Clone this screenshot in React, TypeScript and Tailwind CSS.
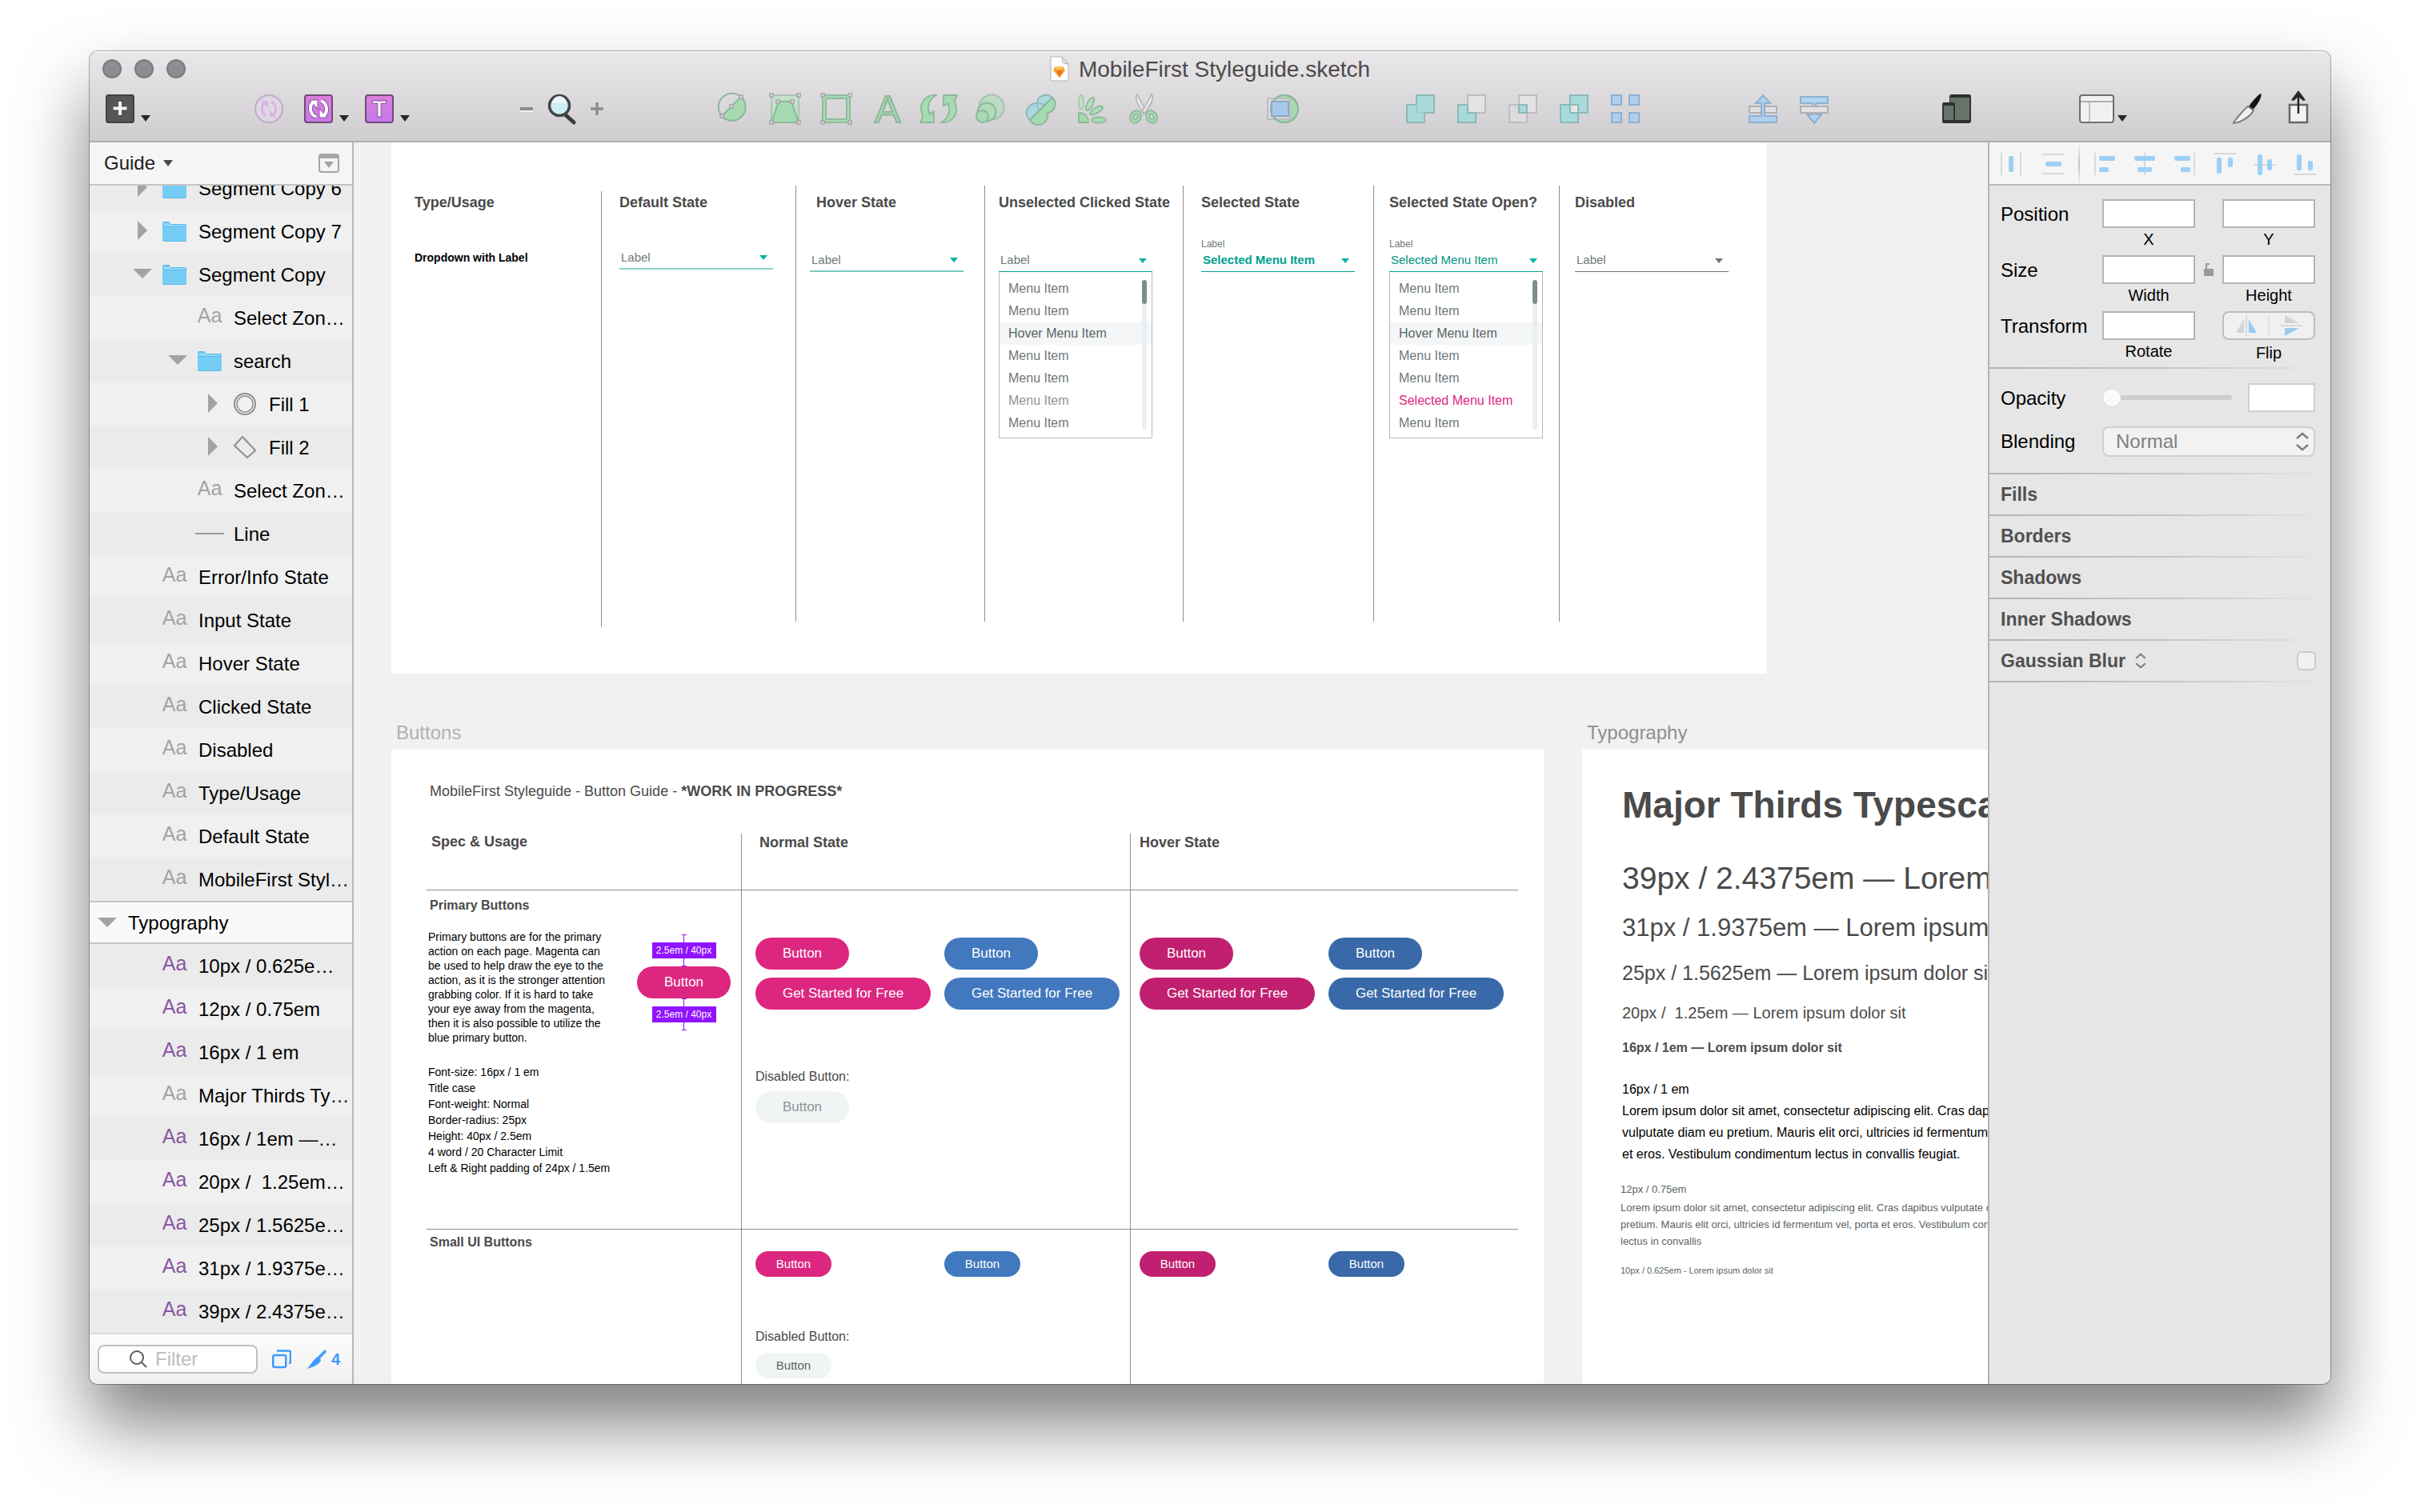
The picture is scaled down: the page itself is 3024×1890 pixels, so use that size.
import React, { useId, useState } from 'react';

type Children = { children?: React.ReactNode };

/* ------------------------------------------------------------------ */
/* Toolbar icons                                                       */
/* ------------------------------------------------------------------ */

const GREEN = '#a6dbb2';
const GREEN_LINE = '#8cb79b';
const GREY_LINE = '#b3b0b3';
const TEAL = '#a8dadb';
const TEAL_LINE = '#8db8ba';
const BLUE = '#aecfee';
const BLUE_LINE = '#8fafd0';

function Icon({ children, className = 'size-10' }: Children & { className?: string }) {
  return (
    <svg viewBox="0 0 40 40" className={className} fill="none" aria-hidden="true">
      {children}
    </svg>
  );
}

function Handle({ x, y }: { x: number; y: number }) {
  return <rect x={x - 2} y={y - 2} width="4" height="4" fill="#e4e2e4" stroke="#aba4ab" strokeWidth="1.6" />;
}

const icons = {
  insert: (
    <Icon>
      <rect x="2" y="2" width="36" height="36" rx="4" fill="#565656" />
      <rect x="3" y="3" width="34" height="34" rx="3" stroke="#414141" strokeWidth="2" />
      <path d="M20 12v17M11.500 20.500h17" stroke="#333" strokeWidth="4" />
      <path d="M20 11v17M11.500 19.500h17" stroke="#f4f4f4" strokeWidth="4" />
    </Icon>
  ),
  createSymbol: (
    <Icon>
      <circle cx="20" cy="20" r="17" fill="#dfd8e2" stroke="#c0acc6" strokeWidth="2" />
      <path d="M17 29c-6-3-8-12-2-17M23 11c6 3 8 12 2 17" stroke="#d9b3e4" strokeWidth="3" />
      <path d="M10 10h9v8zM30 30h-9v-8z" fill="#d9b3e4" />
    </Icon>
  ),
  symbol: (
    <Icon>
      <defs>
        <linearGradient id="violet" x1="0" y1="0" x2="0" y2="1">
          <stop offset="0" stopColor="#dd7fdc" />
          <stop offset="1" stopColor="#c579ec" />
        </linearGradient>
      </defs>
      <rect x="3" y="3" width="34" height="34" rx="3" fill="url(#violet)" stroke="#704a77" strokeWidth="2" />
      <path d="M17 30c-8-3-9-13-4-18M23 10c8 3 9 13 4 18" stroke="#8d4c9d" strokeWidth="6" />
      <path d="M9 9h10v11zM31 31H21V20z" fill="#fff" stroke="#8d4c9d" strokeWidth="1" />
      <path d="M17 30c-8-3-9-13-4-18M23 10c8 3 9 13 4 18" stroke="#fff" strokeWidth="4" />
    </Icon>
  ),
  textStyle: (
    <Icon>
      <rect x="3" y="3" width="34" height="34" rx="3" fill="url(#violet)" stroke="#704a77" strokeWidth="2" />
      <text x="20" y="30" textAnchor="middle" fontFamily="Liberation Sans" fontWeight="700" fontSize="30" fill="#fff" stroke="#8d4c9d" strokeWidth="1">
        T
      </text>
    </Icon>
  ),
  zoom: (
    <Icon>
      <path d="M24 27l11 10" stroke="#3a3a3a" strokeWidth="5" strokeLinecap="round" />
      <circle cx="17" cy="16" r="12.500" fill="#cdeef5" stroke="#444" strokeWidth="3.500" />
      <path d="M8 13a9 9 0 0 1 18 0z" fill="#e6f7fa" />
    </Icon>
  ),
  edit: (
    <Icon>
      <path d="M5 29A17 17 0 1 0 29 5z" fill={GREEN} stroke={GREEN_LINE} strokeWidth="2" />
      <path d="M5 29A17 17 0 0 1 29 5" stroke={GREEN_LINE} strokeWidth="2" />
      <Handle x={5} y={29} />
      <Handle x={17} y={17} />
      <Handle x={29} y={5} />
    </Icon>
  ),
  transform: (
    <Icon>
      <rect x="3" y="3" width="34" height="34" fill="#c5dfca" stroke="#abc4b2" strokeWidth="2" />
      <path d="M12 11h16l9 26H3z" fill={GREEN} stroke={GREEN_LINE} strokeWidth="2" />
      <Handle x={3} y={3} />
      <Handle x={37} y={3} />
      <Handle x={3} y={37} />
      <Handle x={37} y={37} />
      <Handle x={11} y={11} />
      <Handle x={29} y={11} />
    </Icon>
  ),
  resize: (
    <Icon>
      <rect x="5" y="5" width="30" height="30" stroke={GREEN_LINE} strokeWidth="6" />
      <rect x="5" y="5" width="30" height="30" stroke={GREEN} strokeWidth="2.500" />
      <Handle x={3} y={3} />
      <Handle x={37} y={3} />
      <Handle x={3} y={37} />
      <Handle x={37} y={37} />
    </Icon>
  ),
  outlines: (
    <Icon>
      <text x="20" y="37" textAnchor="middle" fontFamily="Liberation Sans" fontSize="48" fill={GREEN} stroke={GREEN_LINE} strokeWidth="2">
        A
      </text>
    </Icon>
  ),
  rotate: (
    <Icon className="h-10 w-12">
      <g fill={GREEN} stroke={GREEN_LINE} strokeWidth="1.800" strokeLinejoin="round">
        <path d="M17 3C3 2-5 13-1 26l1 4-3 7h17V23l-5 4C5 19 7 8 17 3z" />
        <path d="M23 37c14 1 22-10 18-23l-1-4 3-7H26v14l5-4c4 8 2 19-8 24z" />
      </g>
    </Icon>
  ),
  scale: (
    <Icon>
      <circle cx="22" cy="18" r="15.500" fill="#bedcc5" stroke="#a5c2ad" strokeWidth="2" />
      <circle cx="16" cy="24" r="11.500" fill="#b0dbb9" stroke={GREEN_LINE} strokeWidth="2" />
      <circle cx="10.500" cy="29.500" r="7.500" fill={GREEN} stroke={GREEN_LINE} strokeWidth="2" />
    </Icon>
  ),
  flatten: (
    <Icon>
      <path d="M34 6A11 11 0 0 0 15 13A12 12 0 0 0 6 34z" fill="#abd8df" stroke={TEAL_LINE} strokeWidth="2" />
      <path d="M34 6A11 11 0 0 1 28 25A12 12 0 0 1 6 34z" fill={GREEN} stroke={GREEN_LINE} strokeWidth="2" />
      <path d="M15 13c0 5 1 8 3 9M15 13c4 0 7 1 9 3" stroke={TEAL_LINE} strokeWidth="1.500" />
    </Icon>
  ),
  rotateCopies: (
    <Icon>
      <g stroke={GREEN_LINE} strokeWidth="1.800">
        <path d="M3 25c7 0 12 5 12 12H3z" fill={GREEN} />
        <ellipse cx="6" cy="12" rx="3" ry="9" fill="#c6dfcb" stroke="#aac5b1" />
        <ellipse cx="17" cy="14" rx="3.500" ry="9" transform="rotate(28 17 14)" fill="#b7dcbf" />
        <ellipse cx="25" cy="22" rx="3.500" ry="9" transform="rotate(60 25 22)" fill="#acdab6" />
        <ellipse cx="28" cy="34" rx="9" ry="3.500" fill={GREEN} />
      </g>
    </Icon>
  ),
  scissors: (
    <Icon>
      <g stroke={GREY_LINE} strokeWidth="1.500" fill="#eae8ea">
        <path d="M12 2c-3 5-1 10 8 24l3-3C18 14 15 8 12 2z" />
        <path d="M30 2c3 5 1 10-9 24l-3-3C24 14 27 8 30 2z" />
      </g>
      <g stroke={GREEN_LINE} strokeWidth="6">
        <ellipse cx="10" cy="30" rx="4.500" ry="6" transform="rotate(28 10 30)" />
        <ellipse cx="30" cy="30" rx="4.500" ry="6" transform="rotate(-28 30 30)" />
      </g>
      <g stroke={GREEN} strokeWidth="2.500">
        <ellipse cx="10" cy="30" rx="4.500" ry="6" transform="rotate(28 10 30)" />
        <ellipse cx="30" cy="30" rx="4.500" ry="6" transform="rotate(-28 30 30)" />
      </g>
    </Icon>
  ),
  mask: (
    <Icon>
      <circle cx="22" cy="20" r="17" fill={GREEN} stroke={GREEN_LINE} strokeWidth="2" />
      <rect x="1" y="7" width="28" height="26" fill="#dcdadd" fillOpacity="0.7" stroke="#bfbcc0" strokeWidth="2" />
      <circle cx="22" cy="20" r="17" stroke={GREEN_LINE} strokeWidth="2" />
      <rect x="6" y="11" width="21" height="18" fill="#a9c9ea" stroke="#8fa6c9" strokeWidth="2" />
    </Icon>
  ),
  union: (
    <Icon>
      <path d="M15 3h22v22H25v12H3V15h12z" fill={TEAL} stroke={TEAL_LINE} strokeWidth="2" />
      <path d="M15 15v10h10" stroke="#9cc9ca" strokeWidth="1.500" />
    </Icon>
  ),
  subtract: (
    <Icon>
      <rect x="15" y="3" width="22" height="22" fill="#e4e2e4" stroke="#bebcbe" strokeWidth="2" />
      <path d="M3 15h12v10h10v12H3z" fill={TEAL} stroke={TEAL_LINE} strokeWidth="2" />
    </Icon>
  ),
  intersect: (
    <Icon>
      <rect x="3" y="15" width="22" height="22" fill="#dcdadc" stroke="#bebcbe" strokeWidth="2" />
      <rect x="15" y="3" width="22" height="22" fill="#e4e2e4" stroke="#bebcbe" strokeWidth="2" />
      <rect x="15" y="15" width="10" height="10" fill={TEAL} stroke={TEAL_LINE} strokeWidth="2" />
    </Icon>
  ),
  difference: (
    <Icon>
      <path d="M15 3h22v22H25v12H3V15h12z" fill={TEAL} stroke={TEAL_LINE} strokeWidth="2" />
      <rect x="15" y="15" width="10" height="10" fill="#e8e8e8" stroke={TEAL_LINE} strokeWidth="2" />
    </Icon>
  ),
  group: (
    <Icon>
      <g fill={BLUE} stroke={BLUE_LINE} strokeWidth="2">
        <rect x="3" y="3" width="12" height="12" />
        <rect x="25" y="3" width="12" height="12" />
        <rect x="3" y="25" width="12" height="12" />
        <rect x="25" y="25" width="12" height="12" />
      </g>
    </Icon>
  ),
  forward: (
    <Icon>
      <rect x="3" y="17" width="34" height="8" fill="#e2e0e2" stroke={GREY_LINE} strokeWidth="2" />
      <path d="M20 3l9 10h-7v16h15v8H3v-8h15V13h-7z" fill={BLUE} stroke={BLUE_LINE} strokeWidth="2" />
    </Icon>
  ),
  backward: (
    <Icon>
      <path d="M20 38l9-11h-7V13h15V5H3v8h15v14h-7z" fill="#aed6ef" stroke={BLUE_LINE} strokeWidth="2" />
      <rect x="3" y="17" width="34" height="8" fill="#e2e0e2" stroke={GREY_LINE} strokeWidth="2" />
    </Icon>
  ),
  mirror: (
    <Icon>
      <rect x="11" y="2" width="27" height="36" rx="3" fill="#2e312f" />
      <rect x="12" y="6" width="24" height="28" fill="#66756c" />
      <rect x="2" y="12" width="16" height="26" rx="2" fill="#2e312f" />
      <rect x="4" y="16" width="12" height="18" fill="#66756c" />
    </Icon>
  ),
  knife: (
    <Icon>
      <path d="M37 1c3 3-6 17-10 20l-5-4C26 11 34 2 37 1z" fill="#141414" />
      <path d="M21 17l7 5C24 30 12 37 3 38c1-3 12-16 18-21z" fill="#f1f1f1" stroke="#7c7c7c" strokeWidth="2" strokeLinejoin="round" />
    </Icon>
  ),
  share: (
    <Icon>
      <rect x="9" y="15" width="22" height="22" fill="#f3f3f3" stroke="#666" strokeWidth="2.500" />
      <path d="M20 2v24" stroke="#262626" strokeWidth="2.500" />
      <path d="M20-3l9 12-3 1-6-5-6 5-3-1z" fill="#262626" />
    </Icon>
  ),
};

function ToolButton({ name, label }: { name: keyof typeof icons; label: string }) {
  return (
    <button type="button" aria-label={label} className="flex size-10 shrink-0 items-center justify-center [&>svg]:shrink-0 [&>svg]:overflow-visible">
      {icons[name]}
    </button>
  );
}

function Caret({ className = 'w-3 h-2 text-[#262626]' }: { className?: string }) {
  return (
    <svg viewBox="0 0 12 8" preserveAspectRatio="none" className={`shrink-0 ${className}`} aria-hidden="true">
      <path d="M0 0h12L6 8z" fill="currentColor" />
    </svg>
  );
}

function MenuButton({ name, label }: { name: keyof typeof icons; label: string }) {
  return (
    <div className="flex items-end gap-1.5">
      <ToolButton name={name} label={label} />
      <button type="button" aria-label={`${label} menu`} className="pb-1">
        <Caret />
      </button>
    </div>
  );
}

function TitleBar() {
  return (
    <header className="shrink-0 border-b-2 border-[#b0aeb0] bg-linear-to-b from-[#e9e7e9] to-[#cfcdcf] pb-5 shadow-[inset_0_2px_0_#f4f3f4]">
      <div className="grid h-11 grid-cols-[1fr_auto_1fr] items-center px-4">
        <div className="flex gap-4">
          <button type="button" aria-label="Close" className="size-6 rounded-full border-2 border-[#7c7b7e] bg-[#8e8d91]" />
          <button type="button" aria-label="Minimize" className="size-6 rounded-full border-2 border-[#7c7b7e] bg-[#8e8d91]" />
          <button type="button" aria-label="Zoom window" className="size-6 rounded-full border-2 border-[#7c7b7e] bg-[#8e8d91]" />
        </div>
        <div className="flex items-center gap-3">
          <svg viewBox="0 0 24 32" className="h-8 w-6" aria-hidden="true">
            <path d="M1 1h14l8 9v21H1z" fill="#fff" stroke="#b5b3b5" />
            <path d="M15 1c1 4 0 8 2 8l6 1z" fill="#e6e6e6" stroke="#b5b3b5" />
            <path d="M7 13h9l3 5-7 9-8-9z" fill="#f7a32b" />
            <path d="M8 18h8l-4 9z" fill="#e9741c" />
            <path d="M7 13h9l-1 4H8z" fill="#fcc558" />
          </svg>
          <h1 className="pt-0.5 text-[28px] leading-9 text-[#4b494c]">MobileFirst Styleguide.sketch</h1>
        </div>
      </div>
      <div className="mt-2 flex h-10 items-center pr-5 pl-[18px]">
        <MenuButton name="insert" label="Insert" />
        <div className="ml-32 flex items-center gap-[22px]">
          <ToolButton name="createSymbol" label="Create symbol" />
          <MenuButton name="symbol" label="Symbol" />
        </div>
        <div className="ml-[18px] flex">
          <MenuButton name="textStyle" label="Text style" />
        </div>
        <div className="ml-[136px] flex items-center gap-3.5">
          <button type="button" aria-label="Zoom out" className="flex w-5 justify-center">
            <span className="h-1 w-4 bg-[#8e8c8f] shadow-[0_2px_0_#efeeef]" />
          </button>
          <ToolButton name="zoom" label="Zoom" />
          <button type="button" aria-label="Zoom in" className="flex w-5 justify-center">
            <svg viewBox="0 0 16 16" className="size-4" aria-hidden="true">
              <path d="M8 0v16M0 8h16" stroke="#8e8c8f" strokeWidth="3.500" />
            </svg>
          </button>
        </div>
        <div className="ml-[141px] flex gap-6">
          <ToolButton name="edit" label="Edit" />
          <ToolButton name="transform" label="Transform" />
          <ToolButton name="resize" label="Scale" />
          <ToolButton name="outlines" label="Convert to outlines" />
          <ToolButton name="rotate" label="Rotate" />
          <ToolButton name="scale" label="Blend" />
          <ToolButton name="flatten" label="Flatten" />
          <ToolButton name="rotateCopies" label="Rotate copies" />
          <ToolButton name="scissors" label="Scissors" />
        </div>
        <div className="ml-[134px] flex">
          <ToolButton name="mask" label="Mask" />
        </div>
        <div className="ml-[132px] flex gap-6">
          <ToolButton name="union" label="Union" />
          <ToolButton name="subtract" label="Subtract" />
          <ToolButton name="intersect" label="Intersect" />
          <ToolButton name="difference" label="Difference" />
          <ToolButton name="group" label="Group" />
        </div>
        <div className="ml-[132px] flex gap-6">
          <ToolButton name="forward" label="Forward" />
          <ToolButton name="backward" label="Backward" />
        </div>
        <div className="ml-[138px] flex">
          <ToolButton name="mirror" label="Mirror" />
        </div>
        <div className="ml-auto flex items-end gap-1">
          <button type="button" aria-label="View" className="flex h-10 items-center">
            <svg viewBox="0 0 44 36" className="h-9 w-11" aria-hidden="true">
              <rect x="1" y="1" width="42" height="34" rx="3" fill="#f1f1f1" stroke="#6f6f6f" strokeWidth="2" />
              <path d="M2 9h40" stroke="#8c9ba3" strokeWidth="1.500" />
              <path d="M13 10v24" stroke="#b3b3b3" strokeWidth="1.500" />
            </svg>
          </button>
          <button type="button" aria-label="View menu" className="pb-1">
            <Caret />
          </button>
        </div>
        <div className="ml-[130px] flex gap-6">
          <ToolButton name="knife" label="Slice" />
          <ToolButton name="share" label="Export" />
        </div>
      </div>
    </header>
  );
}

/* ------------------------------------------------------------------ */
/* Layer list                                                          */
/* ------------------------------------------------------------------ */

type LayerKind = 'folder' | 'text' | 'style' | 'oval' | 'path' | 'line';
type Layer = { name: string; kind: LayerKind; depth: 1 | 2 | 3; toggle?: 'open' | 'closed' };

const guideLayers: Layer[] = [
  { name: 'Segment Copy 6', kind: 'folder', depth: 1, toggle: 'closed' },
  { name: 'Segment Copy 7', kind: 'folder', depth: 1, toggle: 'closed' },
  { name: 'Segment Copy', kind: 'folder', depth: 1, toggle: 'open' },
  { name: 'Select Zon…', kind: 'text', depth: 2 },
  { name: 'search', kind: 'folder', depth: 2, toggle: 'open' },
  { name: 'Fill 1', kind: 'oval', depth: 3, toggle: 'closed' },
  { name: 'Fill 2', kind: 'path', depth: 3, toggle: 'closed' },
  { name: 'Select Zon…', kind: 'text', depth: 2 },
  { name: 'Line', kind: 'line', depth: 2 },
  { name: 'Error/Info State', kind: 'text', depth: 1 },
  { name: 'Input State', kind: 'text', depth: 1 },
  { name: 'Hover State', kind: 'text', depth: 1 },
  { name: 'Clicked State', kind: 'text', depth: 1 },
  { name: 'Disabled', kind: 'text', depth: 1 },
  { name: 'Type/Usage', kind: 'text', depth: 1 },
  { name: 'Default State', kind: 'text', depth: 1 },
  { name: 'MobileFirst Styl…', kind: 'text', depth: 1 },
];

const typographyLayers: Layer[] = [
  { name: '10px / 0.625e…', kind: 'style', depth: 1 },
  { name: '12px / 0.75em', kind: 'style', depth: 1 },
  { name: '16px / 1 em', kind: 'style', depth: 1 },
  { name: 'Major Thirds Ty…', kind: 'text', depth: 1 },
  { name: '16px / 1em —…', kind: 'style', depth: 1 },
  { name: '20px /\u00a0 1.25em…', kind: 'style', depth: 1 },
  { name: '25px / 1.5625e…', kind: 'style', depth: 1 },
  { name: '31px / 1.9375e…', kind: 'style', depth: 1 },
  { name: '39px / 2.4375e…', kind: 'style', depth: 1 },
];

const indents = { 1: 'pl-12', 2: 'pl-[92px]', 3: 'pl-[136px]' };

function LayerIcon({ kind }: { kind: LayerKind }) {
  if (kind === 'text') return <span className="pb-1 text-[25px] text-[#a3a3a3]">Aa</span>;
  if (kind === 'style') return <span className="pb-1 text-[25px] text-[#8a55a3]">Aa</span>;
  if (kind === 'line') return <span className="h-0.5 w-9 bg-[#999]" />;
  if (kind === 'folder')
    return (
      <svg viewBox="0 0 30 25" className="h-[25px] w-[30px]" aria-hidden="true">
        <path d="M0 2a2 2 0 0 1 2-2h6l3 3h17a2 2 0 0 1 2 2v18a2 2 0 0 1-2 2H2a2 2 0 0 1-2-2z" fill="#5fb9e6" />
        <path d="M1 2h8l2 2h18v2H1z" fill="#8fd8fb" />
        <path d="M0 7h30v15a2 2 0 0 1-2 2H2a2 2 0 0 1-2-2z" fill="#75cdf6" />
      </svg>
    );
  if (kind === 'oval')
    return (
      <svg viewBox="0 0 28 28" className="size-7" fill="none" stroke="#8f8f8f" aria-hidden="true">
        <circle cx="14" cy="14" r="13" strokeWidth="2" />
        <circle cx="14" cy="14" r="10" strokeWidth="1.500" />
      </svg>
    );
  return (
    <svg viewBox="0 0 28 28" className="size-7" fill="none" stroke="#8f8f8f" strokeWidth="2" aria-hidden="true">
      <path d="M11 1l16 17-10 9L1 12z" />
    </svg>
  );
}

function Disclosure({ state }: { state: 'open' | 'closed' }) {
  return (
    <button type="button" aria-label={state === 'open' ? 'Collapse' : 'Expand'}>
      {state === 'open' ? (
        <svg viewBox="0 0 24 12" className="h-3 w-6" aria-hidden="true">
          <path d="M0 0h24L12 12z" fill="#a3a3a3" />
        </svg>
      ) : (
        <svg viewBox="0 0 12 24" className="h-6 w-3" aria-hidden="true">
          <path d="M0 0v24l12-12z" fill="#a3a3a3" />
        </svg>
      )}
    </button>
  );
}

function LayerRow({ layer }: { layer: Layer }) {
  return (
    <li className={`flex h-[54px] shrink-0 items-center odd:bg-[#ebebeb] even:bg-[#f0f0f0] ${indents[layer.depth]}`}>
      <span className="flex w-9 justify-center pb-0.5">{layer.toggle && <Disclosure state={layer.toggle} />}</span>
      <span className="ml-1 flex w-9 justify-center">
        <LayerIcon kind={layer.kind} />
      </span>
      <span className="ml-3 pt-0.5 whitespace-nowrap">{layer.name}</span>
    </li>
  );
}

function Sidebar() {
  return (
    <aside className="flex w-[330px] shrink-0 flex-col border-r-2 border-[#b8b8b8] text-2xl text-black">
      <div className="flex h-[54px] shrink-0 items-center justify-between border-b-2 border-[#c4c4c4] bg-[#f5f5f5] pr-4 pl-[18px]">
        <button type="button" className="flex items-center gap-2.5 text-[#1c1c1c]">
          Guide <Caret className="h-2 w-3 text-[#4a4a4a]" />
        </button>
        <button type="button" aria-label="Collapse pages">
          <svg viewBox="0 0 26 24" className="h-6 w-[26px]" fill="none" aria-hidden="true">
            <rect x="1" y="1" width="24" height="22" rx="3" stroke="#a5a5a5" strokeWidth="2" />
            <path d="M1 4a3 3 0 0 1 3-3h18a3 3 0 0 1 3 3v2H1z" fill="#a5a5a5" />
            <path d="M7 10h12l-6 8z" fill="#a5a5a5" />
          </svg>
        </button>
      </div>
      <div className="flex min-h-0 flex-1 flex-col justify-end overflow-hidden">
        <ul className="flex shrink-0 flex-col">
          {guideLayers.map((layer, i) => (
            <LayerRow key={i} layer={layer} />
          ))}
        </ul>
        <div className="flex h-[54px] shrink-0 items-center gap-3.5 border-y-2 border-[#c6c6c6] bg-[#f9f9f9] pl-2.5">
          <Disclosure state="open" />
          <span className="pt-0.5">Typography</span>
        </div>
        <ul className="flex shrink-0 flex-col">
          {typographyLayers.map((layer, i) => (
            <LayerRow key={i} layer={layer} />
          ))}
        </ul>
      </div>
      <div className="flex h-16 shrink-0 items-center border-t-2 border-[#d9d9d9] bg-linear-to-b from-[#fbfbfb] to-[#f0f0f0] pl-2.5">
        <label className="flex h-9 w-[200px] items-center rounded-lg border-2 border-[#c0c0c0] bg-white pl-[38px]">
          <svg viewBox="0 0 22 22" className="size-[22px] shrink-0" fill="none" stroke="#5a5a5a" strokeWidth="2" aria-hidden="true">
            <circle cx="9" cy="9" r="8" />
            <path d="M15 15l6 6" />
          </svg>
          <input type="text" aria-label="Filter layers" placeholder="Filter" className="ml-2.5 w-full min-w-0 bg-transparent outline-none placeholder:text-[#bdbdbd]" />
        </label>
        <button type="button" aria-label="Show artboards" className="ml-[18px]">
          <svg viewBox="0 0 24 24" className="size-6" fill="none" stroke="#3f9bfc" strokeWidth="2.500" aria-hidden="true">
            <rect x="1.250" y="7" width="16" height="15" rx="2" />
            <path d="M6 1.500h15a2 2 0 0 1 2 2V15a2 2 0 0 1-2 2" />
          </svg>
        </button>
        <button type="button" aria-label="Show 4 slices" className="ml-5 flex items-center gap-1.5 text-xl font-bold text-[#3f9bfc]">
          <svg viewBox="0 0 24 24" className="size-6" fill="#3f9bfc" aria-hidden="true">
            <path d="M22 0c2 1 2 3 1 4l-7 7 1 3C13 20 6 22 0 24c4-5 8-12 13-15z" />
          </svg>
          4
        </button>
      </div>
    </aside>
  );
}

/* ------------------------------------------------------------------ */
/* Dropdown artboard                                                   */
/* ------------------------------------------------------------------ */

function Rule({ className = '' }: { className?: string }) {
  return <div className={`h-[545px] w-px shrink-0 bg-[#8f8f8f] ${className}`} />;
}

function StateColumn({ title, children, className, titleClass = '' }: Children & { title: string; className: string; titleClass?: string }) {
  return (
    <section className={`shrink-0 ${className}`}>
      <h3 className={`flex h-[42px] items-center text-lg font-bold whitespace-nowrap text-[#4a4a4a] ${titleClass}`}>{title}</h3>
      {children}
    </section>
  );
}

type FieldProps = { label: string; value?: string; lineClass: string; textClass?: string; caretClass?: string; boxClass?: string };

function DropField({ label, value, lineClass, textClass = 'text-[#6f7878]', caretClass = 'text-[#00b4a0]', boxClass = 'h-[66px]' }: FieldProps) {
  return (
    <div className={`flex w-48 flex-col justify-end ${boxClass}`}>
      {value && <span className="text-xs leading-[14px] text-[#6f7878]">{label}</span>}
      <button type="button" className={`flex h-7 items-center justify-between pr-[7px] pl-0.5 text-[15px] ${lineClass} ${textClass}`}>
        {value ?? label}
        <Caret className={`h-1.5 w-2.5 ${caretClass}`} />
      </button>
    </div>
  );
}

function DropMenu({ items, selected, faded }: { items: string[]; selected?: number; faded?: number }) {
  return (
    <div className="relative w-48 border border-t-0 border-[#b2bfbe] pt-[7px] pb-1">
      <ul>
        {items.map((item, i) => (
          <li
            key={i}
            className={`h-7 pl-[11px] text-base leading-7 ${
              i === selected ? 'text-[#e0267f]' : item.startsWith('Hover') ? 'bg-[#f4f6f8] text-[#5a6464]' : i === faded ? 'text-[#8c9696]' : 'text-[#6f7878]'
            }`}
          >
            {item}
          </li>
        ))}
      </ul>
      <div className="absolute top-2.5 right-1.5 bottom-2.5 w-1.5 rounded-full bg-[#ebeff2]">
        <div className="h-[30px] rounded-full bg-[#7f8c8d]" />
      </div>
    </div>
  );
}

const menuItems = ['Menu Item', 'Menu Item', 'Hover Menu Item', 'Menu Item', 'Menu Item', 'Menu Item', 'Menu Item'];
const selectedItems = ['Menu Item', 'Menu Item', 'Hover Menu Item', 'Menu Item', 'Menu Item', 'Selected Menu Item', 'Menu Item'];

function DropdownArtboard() {
  return (
    <div className="flex h-[664px] w-[1718px] bg-white pt-[54px]">
      <StateColumn title="Type/Usage" className="w-[262px] pl-[29px]">
        <p className="mt-9 text-sm leading-6 font-bold text-black">Dropdown with Label</p>
      </StateColumn>
      <Rule className="mt-[7px]" />
      <StateColumn title="Default State" className="w-[242px] pl-[22px]">
        <DropField label="Label" lineClass="border-b-2 border-[#7fd8cb]" boxClass="h-[63px]" />
      </StateColumn>
      <Rule />
      <StateColumn title="Hover State" className="w-[235px] pl-[17px]" titleClass="pl-2">
        <DropField label="Label" lineClass="border-b-2 border-[#7bcabd]" />
      </StateColumn>
      <Rule />
      <StateColumn title="Unselected Clicked State" className="w-[247px] pl-[17px]">
        <DropField label="Label" lineClass="border-b border-[#00a190]" />
        <DropMenu items={menuItems} faded={5} />
      </StateColumn>
      <Rule />
      <StateColumn title="Selected State" className="w-[237px] pl-[22px]">
        <DropField label="Label" value="Selected Menu Item" textClass="font-bold text-[#00a190]" lineClass="border-b border-[#00a190]" />
      </StateColumn>
      <Rule />
      <StateColumn title="Selected State Open?" className="w-[231px] pl-[19px]">
        <DropField label="Label" value="Selected Menu Item" textClass="text-[#00927f]" lineClass="border-b border-[#00a190]" />
        <DropMenu items={selectedItems} selected={5} />
      </StateColumn>
      <Rule />
      <StateColumn title="Disabled" className="pl-[19px]">
        <DropField label="Label" lineClass="border-b border-[#6f7878]" caretClass="text-[#6f7878]" />
      </StateColumn>
    </div>
  );
}

/* ------------------------------------------------------------------ */
/* Button artboard                                                     */
/* ------------------------------------------------------------------ */

const tones = {
  magenta: 'bg-[#dc267f] text-white',
  blue: 'bg-[#4178be] text-white',
  magentaHover: 'bg-[#c12070] text-white',
  blueHover: 'bg-[#3969a8] text-white',
  disabled: 'bg-[#f0f4f5] text-[#8c9494]',
  disabledSmall: 'bg-[#f0f4f5] text-[#5a6464]',
};

const shapes = {
  normal: 'h-10 w-[117px] text-[17px]',
  wide: 'h-10 w-[219px] text-[17px]',
  small: 'h-8 w-[95px] text-[15px]',
};

function Pill({ tone, shape = 'normal', children }: Children & { tone: keyof typeof tones; shape?: keyof typeof shapes }) {
  return (
    <button type="button" disabled={tone.startsWith('disabled')} className={`flex items-center justify-center rounded-full whitespace-nowrap ${shapes[shape]} ${tones[tone]}`}>
      {children}
    </button>
  );
}

function Measure() {
  return (
    <div className="flex flex-col items-center">
      <span className="h-px w-1.5 bg-[#9013fe]" />
      <span className="h-[9px] w-px bg-[#9013fe]" />
      <span className="h-5 w-20 bg-[#9013fe] text-center text-xs leading-5 text-white">2.5em / 40px</span>
      <span className="h-[9px] w-px bg-[#9013fe]" />
      <span className="h-px w-1.5 bg-[#9013fe]" />
    </div>
  );
}

const usage = [
  'Primary buttons are for the primary',
  'action on each page. Magenta can',
  'be used to help draw the eye to the',
  'action, as it is the stronger attention',
  'grabbing color. If it is hard to take',
  'your eye away from the magenta,',
  'then it is also possible to utilize the',
  'blue primary button.',
];

const specs = [
  'Font-size: 16px / 1 em',
  'Title case',
  'Font-weight: Normal',
  'Border-radius: 25px',
  'Height: 40px / 2.5em',
  '4 word / 20 Character Limit',
  'Left & Right padding of 24px / 1.5em',
];

function PillGrid({ left, right, shape }: { left: keyof typeof tones; right: keyof typeof tones; shape?: 'small' }) {
  return (
    <div className="grid grid-cols-[236px_auto] justify-start gap-y-2.5">
      <Pill tone={left} shape={shape}>Button</Pill>
      <Pill tone={right} shape={shape}>Button</Pill>
      {!shape && (
        <>
          <Pill tone={left} shape="wide">Get Started for Free</Pill>
          <Pill tone={right} shape="wide">Get Started for Free</Pill>
        </>
      )}
    </div>
  );
}

function ButtonArtboard() {
  return (
    <div className="h-[1100px] w-[1440px] bg-white pr-8 pl-11 text-[#4a4a4a]">
      <h2 className="pt-10 pl-1 text-lg leading-6">
        MobileFirst Styleguide - Button Guide - <strong>*WORK IN PROGRESS*</strong>
      </h2>
      <div className="mt-[41px] grid grid-cols-[393px_486px_1fr]">
        <h3 className="h-[71px] border-b border-[#8f8f8f] pl-1.5 text-lg leading-5 font-bold">Spec &amp; Usage</h3>
        <h3 className="h-[71px] border-b border-l border-[#8f8f8f] pt-px pl-[22px] text-lg leading-5 font-bold">Normal State</h3>
        <h3 className="h-[71px] border-b border-l border-[#8f8f8f] pt-px pl-[11px] text-lg leading-5 font-bold">Hover State</h3>

        <div className="h-[424px] border-b border-[#8f8f8f] pt-[7px] pl-0.5">
          <h4 className="pl-0.5 text-base font-bold">Primary Buttons</h4>
          <div className="mt-3.5 flex text-sm text-black">
            <div className="mt-1 w-[230px] whitespace-nowrap">
              {usage.map((line) => (
                <p key={line} className="leading-[18px]">{line}</p>
              ))}
              <ul className="mt-6">
                {specs.map((line) => (
                  <li key={line} className="leading-5">{line}</li>
                ))}
              </ul>
            </div>
            <div className="ml-[31px] flex flex-col items-center pt-2.5">
              <Measure />
              <Pill tone="magenta">Button</Pill>
              <Measure />
            </div>
          </div>
        </div>
        <div className="h-[424px] border-b border-l border-[#8f8f8f] pt-[59px] pl-[17px]">
          <PillGrid left="magenta" right="blue" />
          <p className="mt-[72px] mb-1.5 text-base">Disabled Button:</p>
          <Pill tone="disabled">Button</Pill>
        </div>
        <div className="h-[424px] border-b border-l border-[#8f8f8f] pt-[59px] pl-[11px]">
          <PillGrid left="magentaHover" right="blueHover" />
        </div>

        <div className="pt-1 pl-1">
          <h4 className="text-base font-bold">Small UI Buttons</h4>
        </div>
        <div className="h-[400px] border-l border-[#8f8f8f] pt-[27px] pl-[17px]">
          <PillGrid left="magenta" right="blue" shape="small" />
          <p className="mt-[63px] mb-2 text-base">Disabled Button:</p>
          <Pill tone="disabledSmall" shape="small">Button</Pill>
        </div>
        <div className="h-[400px] border-l border-[#8f8f8f] pt-[27px] pl-[11px]">
          <PillGrid left="magentaHover" right="blueHover" shape="small" />
        </div>
      </div>
    </div>
  );
}

/* ------------------------------------------------------------------ */
/* Typography artboard                                                 */
/* ------------------------------------------------------------------ */

function TypographyArtboard() {
  return (
    <div className="h-[1100px] w-[1440px] bg-white pt-[41px] pl-[50px] whitespace-nowrap text-[#4a4a4a]">
      <h2 className="text-[46px] leading-[56px] font-bold">Major Thirds Typescale</h2>
      <p className="mt-10 text-[39px] leading-[48px]">39px / 2.4375em — Lorem ipsum dolor sit</p>
      <p className="mt-[18px] text-[31px] leading-10">31px / 1.9375em — Lorem ipsum dolor sit</p>
      <p className="mt-5 text-[25px] leading-8">25px / 1.5625em — Lorem ipsum dolor sit</p>
      <p className="mt-5 text-xl leading-7">20px /{'\u00a0'} 1.25em — Lorem ipsum dolor sit</p>
      <p className="mt-[18px] text-base leading-6 font-bold">16px / 1em — Lorem ipsum dolor sit</p>
      <div className="mt-[26px] text-base leading-[27px] text-black">
        <p>16px / 1 em</p>
        <p>Lorem ipsum dolor sit amet, consectetur adipiscing elit. Cras dapibus</p>
        <p>vulputate diam eu pretium. Mauris elit orci, ultricies id fermentum vel, porta</p>
        <p>et eros. Vestibulum condimentum lectus in convallis feugiat.</p>
      </div>
      <div className="-ml-0.5 text-[#5a6464]">
        <div className="mt-5 text-[13px] leading-[21px]">
          <p className="mb-0.5">12px / 0.75em</p>
          <p>Lorem ipsum dolor sit amet, consectetur adipiscing elit. Cras dapibus vulputate diam eu</p>
          <p>pretium. Mauris elit orci, ultricies id fermentum vel, porta et eros. Vestibulum condimentum</p>
          <p>lectus in convallis</p>
        </div>
        <p className="mt-4 text-[11px] leading-5">10px / 0.625em - Lorem ipsum dolor sit</p>
      </div>
    </div>
  );
}

function Canvas() {
  return (
    <main className="relative min-w-0 flex-1 overflow-hidden bg-[#f1f1f1]">
      <div className="absolute top-0 left-[47px]">
        <DropdownArtboard />
      </div>
      <div className="absolute top-[718px] left-[47px]">
        <p className="h-[41px] pt-0.5 pl-1.5 text-2xl leading-9 text-[#b2b2b2]">Buttons</p>
        <ButtonArtboard />
      </div>
      <div className="absolute top-[718px] left-[1535px]">
        <p className="h-[41px] pt-0.5 pl-1.5 text-2xl leading-9 text-[#8f8f8f]">Typography</p>
        <TypographyArtboard />
      </div>
    </main>
  );
}

/* ------------------------------------------------------------------ */
/* Inspector                                                           */
/* ------------------------------------------------------------------ */

function AlignIcon({ label, lines, bars }: { label: string; lines: string; bars: [number, number, number, number][] }) {
  return (
    <button type="button" aria-label={label}>
      <svg viewBox="0 0 28 28" className="size-7" aria-hidden="true">
        <path d={lines} stroke="#d9d9d9" strokeWidth="2" />
        {bars.map(([x, y, w, h], i) => (
          <rect key={i} x={x} y={y} width={w} height={h} rx="2" fill="#9dd0f7" />
        ))}
      </svg>
    </button>
  );
}

function FadeRule() {
  return <div className="h-0.5 bg-linear-to-r from-[#b4b4b4] via-[#c4c4c4] to-[#e6e6e6]" />;
}

function NumberField({ caption }: { caption: string }) {
  const id = useId();
  return (
    <div className="flex flex-col items-center">
      <input id={id} type="text" className="h-9 w-full border-2 border-[#b4b4b4] bg-white px-1" />
      <label htmlFor={id} className="text-xl leading-7 text-black">{caption}</label>
    </div>
  );
}

function Chevrons({ className }: { className: string }) {
  return (
    <svg viewBox="0 0 16 24" className={className} fill="none" stroke="#808080" strokeWidth="2.500" aria-hidden="true">
      <path d="M1 8l7-6 7 6M1 16l7 6 7-6" />
    </svg>
  );
}

function SectionRow({ title, children }: Children & { title: string }) {
  return (
    <>
      <div className="flex h-[50px] items-center pr-[18px] pl-3.5">
        <h3 className="text-[23px] font-bold text-[#505050]">{title}</h3>
        {children}
      </div>
      <FadeRule />
    </>
  );
}

function Inspector() {
  const [opacity, setOpacity] = useState(0);
  const [blur, setBlur] = useState(false);
  return (
    <aside className="w-[428px] shrink-0 border-l-2 border-[#b3b3b3] bg-[#e6e6e6] text-2xl text-black">
      <div className="flex h-[54px] items-center border-b-2 border-[#b9b9b9] bg-[#f5f5f5] pt-0.5 pl-[13px]">
        <div className="flex gap-[25px]">
          <AlignIcon label="Distribute horizontally" lines="M2 0v28M26 0v28" bars={[[11, 4, 6, 20]]} />
          <AlignIcon label="Distribute vertically" lines="M0 2h28M0 26h28" bars={[[4, 11, 20, 6]]} />
        </div>
        <div className="mx-[17px] h-full w-0.5 bg-linear-to-b from-[#f0f0f0] via-[#c4c4c4] to-[#f0f0f0]" />
        <div className="flex gap-[22px]">
          <AlignIcon label="Align left" lines="M2 0v28" bars={[[7, 4, 20, 6], [7, 18, 12, 6]]} />
          <AlignIcon label="Align center" lines="M14 0v28" bars={[[1, 4, 26, 6], [5, 18, 18, 6]]} />
          <AlignIcon label="Align right" lines="M26 0v28" bars={[[1, 4, 20, 6], [9, 18, 12, 6]]} />
          <AlignIcon label="Align top" lines="M0 1h28" bars={[[4, 6, 6, 20], [18, 6, 6, 12]]} />
          <AlignIcon label="Align middle" lines="M0 15h28" bars={[[5, 2, 6, 26], [17, 8, 6, 14]]} />
          <AlignIcon label="Align bottom" lines="M0 27h28" bars={[[4, 2, 6, 20], [18, 10, 6, 12]]} />
        </div>
      </div>

      <div className="grid auto-rows-[70px] grid-cols-[127px_116px_34px_1fr] pt-[17px] pr-[19px] pl-3.5">
        <span className="leading-[38px]">Position</span>
        <NumberField caption="X" />
        <span />
        <NumberField caption="Y" />
        <span className="leading-[38px]">Size</span>
        <NumberField caption="Width" />
        <button type="button" aria-label="Lock proportions" className="flex h-9 items-center justify-center">
          <svg viewBox="0 0 12 16" className="h-4 w-3" aria-hidden="true">
            <path d="M3 8V1h4" stroke="#999" strokeWidth="2" fill="none" />
            <rect y="7" width="12" height="9" fill="#999" />
          </svg>
        </button>
        <NumberField caption="Height" />
        <span className="leading-[38px]">Transform</span>
        <NumberField caption="Rotate" />
        <span />
        <div className="flex flex-col items-center">
          <div className="flex h-9 w-full items-center rounded-lg border-2 border-[#bdbdbd] bg-[#f0f0f0]">
            <button type="button" aria-label="Flip horizontally" className="flex flex-1 justify-center">
              <svg viewBox="0 0 28 26" className="h-[26px] w-7" aria-hidden="true">
                <path d="M1 22L11 5v17z" fill="#d3d3d3" />
                <path d="M14 0v26" stroke="#d9d9d9" strokeWidth="2" />
                <path d="M17 5l10 17H17z" fill="#98cbf2" />
              </svg>
            </button>
            <span className="h-7 w-0.5 bg-[#e2e2e2]" />
            <button type="button" aria-label="Flip vertically" className="flex flex-1 justify-center">
              <svg viewBox="0 0 28 26" className="h-[26px] w-7" aria-hidden="true">
                <path d="M5 0l18 10H5z" fill="#d3d3d3" />
                <path d="M0 13h28" stroke="#d9d9d9" strokeWidth="2" />
                <path d="M5 26l18-10H5z" fill="#98cbf2" />
              </svg>
            </button>
          </div>
          <span className="text-xl leading-8">Flip</span>
        </div>
      </div>
      <FadeRule />

      <div className="flex flex-col gap-[18px] pt-[18px] pr-[19px] pb-5 pl-3.5">
        <div className="flex h-9 items-center">
          <label htmlFor="opacity" className="w-[127px] pt-0.5">Opacity</label>
          <input
            id="opacity"
            type="range"
            min="0"
            max="100"
            value={opacity}
            onChange={(e) => setOpacity(Number(e.target.value))}
            className="h-1.5 w-[162px] appearance-none rounded-full bg-[#cdcdcd] [&::-webkit-slider-thumb]:size-6 [&::-webkit-slider-thumb]:appearance-none [&::-webkit-slider-thumb]:rounded-full [&::-webkit-slider-thumb]:border [&::-webkit-slider-thumb]:border-[#d2d2d2] [&::-webkit-slider-thumb]:bg-[#fafafa]"
          />
          <input type="text" aria-label="Opacity value" className="ml-auto h-9 w-[84px] border-2 border-[#cfcfcf] bg-white px-1" />
        </div>
        <div className="flex h-[38px] items-center">
          <label htmlFor="blending" className="w-[127px]">Blending</label>
          <div className="relative flex-1">
            <select id="blending" className="h-[38px] w-full appearance-none rounded-lg border-2 border-[#cfcfcf] bg-[#f2f2f2] pl-[15px] text-[#808080]">
              <option>Normal</option>
              <option>Multiply</option>
              <option>Screen</option>
            </select>
            <Chevrons className="pointer-events-none absolute top-[7px] right-2 h-6 w-4" />
          </div>
        </div>
      </div>
      <FadeRule />

      <SectionRow title="Fills" />
      <SectionRow title="Borders" />
      <SectionRow title="Shadows" />
      <SectionRow title="Inner Shadows" />
      <SectionRow title="Gaussian Blur">
        <button type="button" aria-label="Blur type" className="ml-3">
          <Chevrons className="h-5 w-3.5" />
        </button>
        <input
          type="checkbox"
          aria-label="Enable blur"
          checked={blur}
          onChange={(e) => setBlur(e.target.checked)}
          className="ml-auto size-6 appearance-none rounded-md border-2 border-[#c9c9c9] bg-[#f1f1f1] checked:bg-[#3f9bfc]"
        />
      </SectionRow>
    </aside>
  );
}

export default function App() {
  return (
    <div className="flex h-screen flex-col overflow-hidden bg-white px-28 pt-16 pb-40 font-['Liberation_Sans',Arial,sans-serif]">
      <div className="flex min-h-0 flex-1 rounded-[10px] shadow-[0_0_0_1px_rgba(0,0,0,0.3),0_50px_88px_rgba(0,0,0,0.5)]">
        <div className="flex min-w-0 flex-1 flex-col overflow-hidden rounded-[10px]">
          <TitleBar />
          <div className="flex min-h-0 flex-1">
            <Sidebar />
            <Canvas />
            <Inspector />
          </div>
        </div>
      </div>
    </div>
  );
}
